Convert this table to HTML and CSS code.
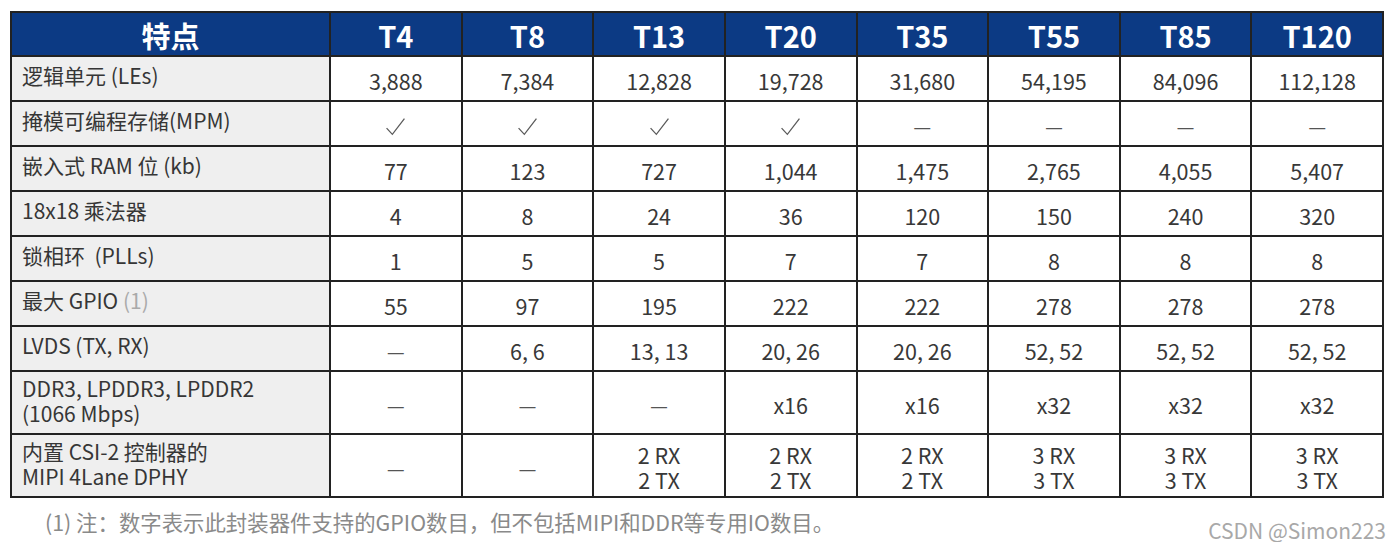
FILE: index.html
```html
<!DOCTYPE html>
<html lang="zh-CN">
<head>
<meta charset="utf-8">
<title>特点</title>
<link rel="stylesheet" href="styles.css">
</head>
<body>
<div class="page">
  <table class="spec">
    <colgroup>
      <col class="c-feat">
      <col><col><col><col><col><col><col><col>
    </colgroup>
    <thead>
      <tr>
        <th>特点</th><th>T4</th><th>T8</th><th>T13</th><th>T20</th><th>T35</th><th>T55</th><th>T85</th><th>T120</th>
      </tr>
    </thead>
    <tbody>
      <tr>
        <td class="feat">逻辑单元 (LEs)</td><td>3,888</td><td>7,384</td><td>12,828</td><td>19,728</td><td>31,680</td><td>54,195</td><td>84,096</td><td>112,128</td>
      </tr>
      <tr>
        <td class="feat">掩模可编程存储(MPM)</td>
        <td><svg class="chk" viewBox="0 0 20 18"><path d="M1.5 10.5 L7 16.5 L18.5 1.5"/></svg></td>
        <td><svg class="chk" viewBox="0 0 20 18"><path d="M1.5 10.5 L7 16.5 L18.5 1.5"/></svg></td>
        <td><svg class="chk" viewBox="0 0 20 18"><path d="M1.5 10.5 L7 16.5 L18.5 1.5"/></svg></td>
        <td><svg class="chk" viewBox="0 0 20 18"><path d="M1.5 10.5 L7 16.5 L18.5 1.5"/></svg></td>
        <td><span class="dash">—</span></td><td><span class="dash">—</span></td><td><span class="dash">—</span></td><td><span class="dash">—</span></td>
      </tr>
      <tr>
        <td class="feat">嵌入式 RAM 位 (kb)</td><td>77</td><td>123</td><td>727</td><td>1,044</td><td>1,475</td><td>2,765</td><td>4,055</td><td>5,407</td>
      </tr>
      <tr>
        <td class="feat">18x18 乘法器</td><td>4</td><td>8</td><td>24</td><td>36</td><td>120</td><td>150</td><td>240</td><td>320</td>
      </tr>
      <tr>
        <td class="feat">锁相环&nbsp;&nbsp;(PLLs)</td><td>1</td><td>5</td><td>5</td><td>7</td><td>7</td><td>8</td><td>8</td><td>8</td>
      </tr>
      <tr>
        <td class="feat">最大 GPIO <span class="note">(1)</span></td><td>55</td><td>97</td><td>195</td><td>222</td><td>222</td><td>278</td><td>278</td><td>278</td>
      </tr>
      <tr>
        <td class="feat">LVDS (TX, RX)</td><td><span class="dash">—</span></td><td>6, 6</td><td>13, 13</td><td>20, 26</td><td>20, 26</td><td>52, 52</td><td>52, 52</td><td>52, 52</td>
      </tr>
      <tr class="tall">
        <td class="feat">DDR3, LPDDR3, LPDDR2<br>(1066 Mbps)</td><td><span class="dash">—</span></td><td><span class="dash">—</span></td><td><span class="dash">—</span></td><td>x16</td><td>x16</td><td>x32</td><td>x32</td><td>x32</td>
      </tr>
      <tr class="tall">
        <td class="feat">内置 CSI-2 控制器的<br>MIPI 4Lane DPHY</td><td><span class="dash">—</span></td><td><span class="dash">—</span></td><td>2 RX<br>2 TX</td><td>2 RX<br>2 TX</td><td>2 RX<br>2 TX</td><td>3 RX<br>3 TX</td><td>3 RX<br>3 TX</td><td>3 RX<br>3 TX</td>
      </tr>
    </tbody>
  </table>
  <div class="foot">
    <p class="footnote">(1) 注：数字表示此封装器件支持的GPIO数目，但不包括MIPI和DDR等专用IO数目。</p>
    <span class="mark">CSDN @Simon223</span>
  </div>
</div>
</body>
</html>
```

FILE: styles.css
```css
html, body {
  margin: 0;
  padding: 0;
  background: #ffffff;
}

body {
  font-family: "Noto Sans CJK SC", "Noto Sans", sans-serif;
  color: #333333;
}

.page {
  width: 1376px;
  padding: 11px 0 0 10px;
}

.spec {
  width: 1374px;
  table-layout: fixed;
  border-collapse: collapse;
  border: 2px solid #222222;
}

.c-feat {
  width: 319px;
}

.spec th,
.spec td {
  border: 2px solid #222222;
  padding: 0;
  text-align: center;
  vertical-align: middle;
}

.spec th {
  height: 40px;
  background: #0c3a84;
  color: #ffffff;
  font-size: 29px;
  font-weight: 700;
  line-height: 30px;
  padding-top: 2px;
}

.spec td {
  height: 38px;
  font-size: 21.5px;
  line-height: 24px;
  padding-top: 5px;
  color: #383838;
}

.spec tr.tall td {
  height: 58px;
  line-height: 25px;
  padding-top: 3px;
}

.spec td.feat {
  height: 36px;
  background: #efefef;
  text-align: left;
  font-size: 21px;
  line-height: 25px;
  padding: 0 0 7px 10px;
  color: #363636;
}

.spec tr.tall td.feat {
  height: 57px;
  padding-top: 0;
  padding-bottom: 4px;
}

.note {
  color: #aaaaaa;
}

.dash {
  font-family: "Liberation Sans", sans-serif;
  font-size: 16px;
  color: #555555;
}

.chk {
  width: 21px;
  height: 19px;
  vertical-align: middle;
  margin-top: -6px;
}

.chk path {
  fill: none;
  stroke: #5a5a5a;
  stroke-width: 1.2;
}

.foot {
  display: flex;
  justify-content: space-between;
  align-items: flex-start;
  width: 1376px;
  margin-top: 11px;
}

.footnote {
  margin: 0 0 0 35px;
  font-size: 21.4px;
  line-height: 26px;
  color: #8a8a8a;
}

.mark {
  margin-top: 9px;
  font-size: 21px;
  line-height: 24px;
  color: #a8a8a8;
}
```
